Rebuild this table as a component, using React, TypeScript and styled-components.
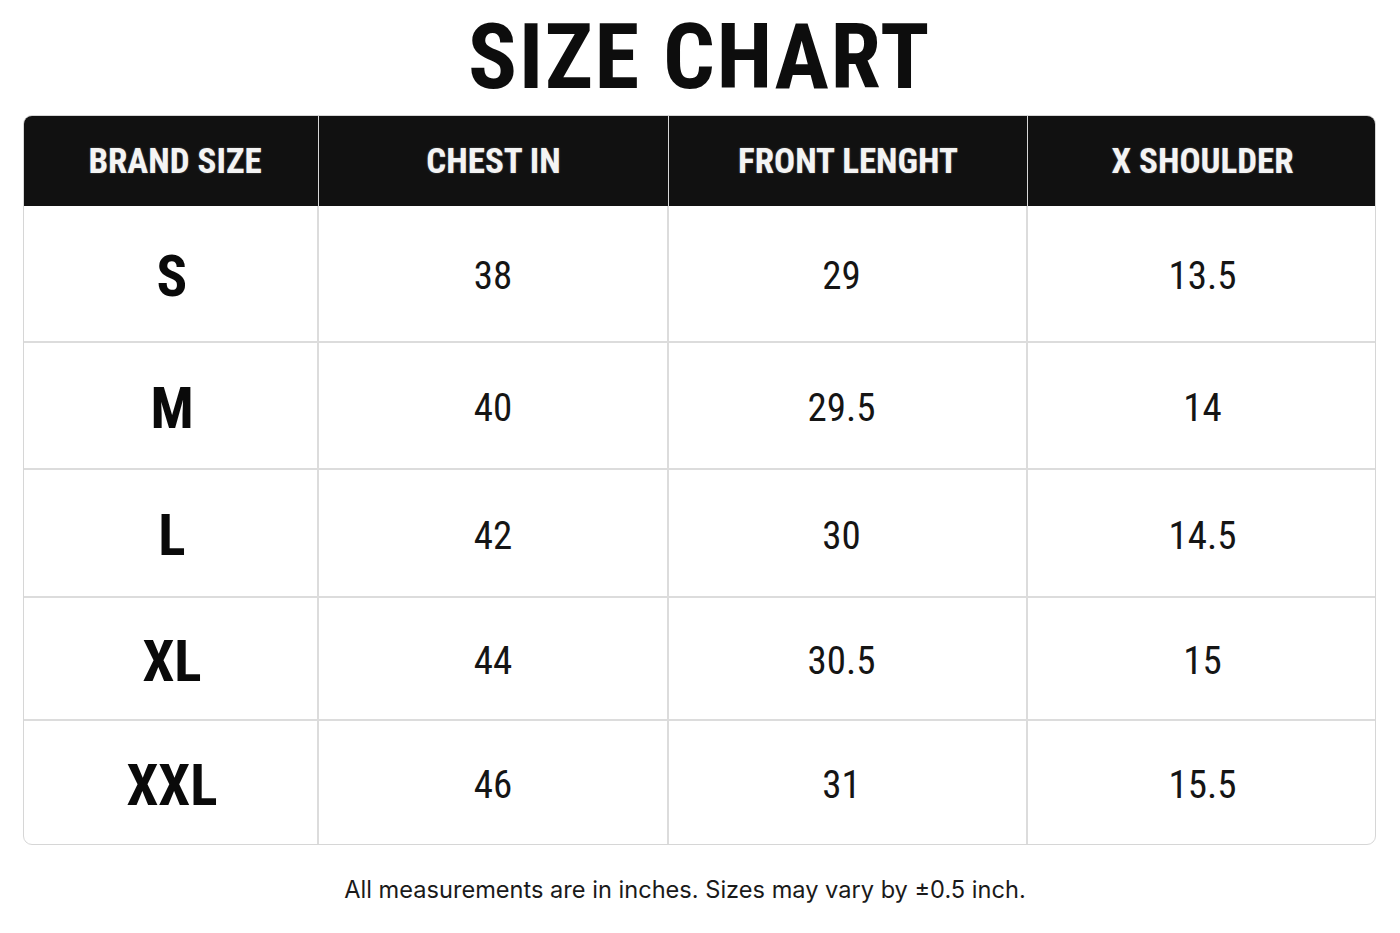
import React from 'react';
import styled, { createGlobalStyle } from 'styled-components';

interface SizeRow {
  size: string;
  chest: string;
  length: string;
  shoulder: string;
  height: number;
}

const GlobalStyle = createGlobalStyle`
  html, body {
    margin: 0;
    padding: 0;
    background: #ffffff;
  }
  body {
    font-family: "Roboto Condensed", Roboto, "Liberation Sans", sans-serif;
    color: #111;
  }
`;

const Page = styled.div`
  width: 1400px;
  height: 933px;
  box-sizing: border-box;
  padding: 12px 24px 0 23px;
  display: flex;
  flex-direction: column;
  align-items: center;
`;

const Title = styled.h1`
  margin: 0;
  height: 103px;
  font-family: "Roboto Condensed", Roboto, sans-serif;
  font-stretch: 75%;
  font-weight: 700;
  font-size: 91px;
  line-height: 91px;
  letter-spacing: 1.5px;
  color: #0d0d0d;
`;

const Table = styled.div`
  width: 1353px;
  display: grid;
  grid-template-columns: 295px 350px 359px 349px;
  border: 1px solid #d6d6d6;
  border-radius: 9px;
  overflow: hidden;
  box-sizing: border-box;
  background: #fff;
`;

const HeadCell = styled.div<{ last?: boolean; inset?: number }>`
  height: 90px;
  background: #111111;
  color: #f4f4f4;
  display: flex;
  align-items: center;
  justify-content: center;
  font-family: "Roboto Condensed", Roboto, sans-serif;
  font-stretch: 75%;
  font-weight: 700;
  font-size: 35px;
  padding-left: ${p => p.inset ?? 0}px;
  box-sizing: border-box;
  text-shadow: 0 0 2px rgba(255, 255, 255, 0.35);
  border-right: ${p => (p.last ? 'none' : '1px solid #d8d8d8')};
`;

const Cell = styled.div<{ last?: boolean; bold?: boolean; bottom?: boolean; shift?: number }>`
  display: flex;
  align-items: center;
  justify-content: center;
  font-family: "Roboto Condensed", Roboto, sans-serif;
  font-stretch: 75%;
  font-weight: ${p => (p.bold ? 700 : 400)};
  font-size: ${p => (p.bold ? '57px' : '39px')};
  color: ${p => (p.bold ? '#0a0a0a' : '#151515')};
  padding-top: 5px;
  padding-left: ${p => (p.shift && p.shift > 0 ? `${p.shift}px` : '0')};
  padding-right: ${p => (p.shift && p.shift < 0 ? `${-p.shift}px` : '0')};
  box-sizing: border-box;
  border-right: ${p => (p.last ? 'none' : '2px solid #dcdcdc')};
  border-bottom: ${p => (p.bottom ? 'none' : '2px solid #dcdcdc')};
`;

const Note = styled.p`
  margin: 30px 29px 0 0;
  font-family: Inter, "Noto Sans", sans-serif;
  font-size: 23.6px;
  color: #1a1a1a;
`;

const headers = ['BRAND SIZE', 'CHEST IN', 'FRONT LENGHT', 'X SHOULDER'];

const rows: SizeRow[] = [
  { size: 'S', chest: '38', length: '29', shoulder: '13.5', height: 137 },
  { size: 'M', chest: '40', length: '29.5', shoulder: '14', height: 127 },
  { size: 'L', chest: '42', length: '30', shoulder: '14.5', height: 128 },
  { size: 'XL', chest: '44', length: '30.5', shoulder: '15', height: 123 },
  { size: 'XXL', chest: '46', length: '31', shoulder: '15.5', height: 123 },
];

const App: React.FC = () => {
  return (
    <>
      <GlobalStyle />
      <Page>
        <Title>SIZE CHART</Title>
        <Table>
          {headers.map((h, i) => (
            <HeadCell key={h} inset={i === 0 ? 8 : 0} last={i === headers.length - 1}>
              {h}
            </HeadCell>
          ))}
          {rows.map((r, idx) => {
            const bottom = idx === rows.length - 1;
            return (
              <React.Fragment key={r.size}>
                <Cell bold bottom={bottom} shift={3} style={{ height: r.height }}>{r.size}</Cell>
                <Cell bottom={bottom} style={{ height: r.height }}>{r.chest}</Cell>
                <Cell bottom={bottom} shift={-12} style={{ height: r.height }}>{r.length}</Cell>
                <Cell last bottom={bottom} style={{ height: r.height }}>{r.shoulder}</Cell>
              </React.Fragment>
            );
          })}
        </Table>
        <Note>All measurements are in inches. Sizes may vary by ±0.5 inch.</Note>
      </Page>
    </>
  );
};

export default App;
